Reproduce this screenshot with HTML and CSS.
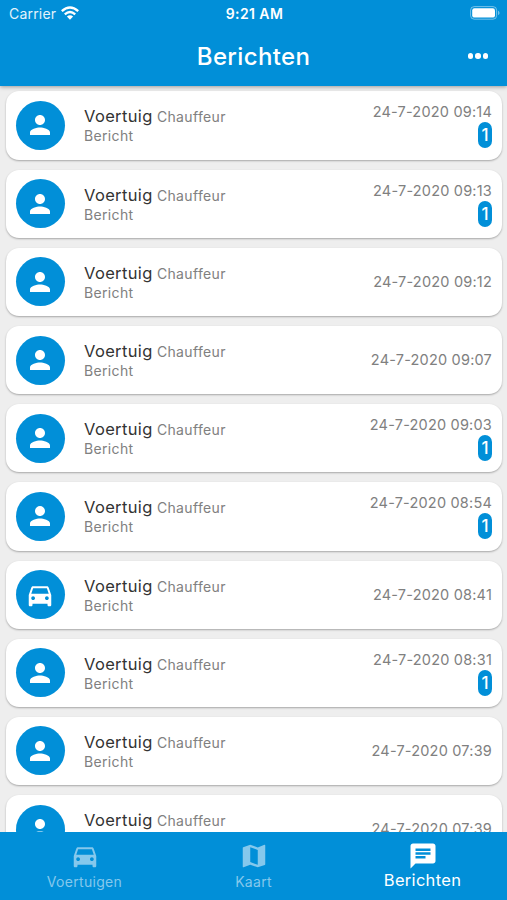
FILE: index.html
```html
<!DOCTYPE html>
<html lang="nl">
<head>
    <meta charset="UTF-8">
    <meta name="viewport" content="width=device-width, initial-scale=1.0">
    <title>Berichten</title>
    <link rel="stylesheet" href="styles.css">
</head>
<body>

    <svg class="sprite">
        <symbol id="person" viewBox="0 0 24 24"><path d="M12 12c2.21 0 4-1.79 4-4s-1.79-4-4-4-4 1.79-4 4 1.79 4 4 4zm0 2c-2.67 0-8 1.34-8 4v2h16v-2c0-2.66-5.33-4-8-4z"/></symbol>
        <symbol id="car" viewBox="0 0 24 24"><path d="M18.92 6.01C18.72 5.42 18.16 5 17.5 5h-11c-.66 0-1.21.42-1.42 1.01L3 12v8c0 .55.45 1 1 1h1c.55 0 1-.45 1-1v-1h12v1c0 .55.45 1 1 1h1c.55 0 1-.45 1-1v-8l-2.08-5.99zM6.5 16c-.83 0-1.5-.67-1.5-1.5S5.67 13 6.5 13s1.5.67 1.5 1.5S7.33 16 6.5 16zm11 0c-.83 0-1.5-.67-1.5-1.5s.67-1.5 1.5-1.5 1.5.67 1.5 1.5-.67 1.5-1.5 1.5zM5 11l1.5-4.5h11L19 11H5z"/></symbol>
        <symbol id="map" viewBox="0 0 24 24"><path d="M20.5 3l-.16.03L15 5.1 9 3 3.36 4.9c-.21.07-.36.25-.36.48V20.5c0 .28.22.5.5.5l.16-.03L9 18.9l6 2.1 5.64-1.9c.21-.07.36-.25.36-.48V3.5c0-.28-.22-.5-.5-.5zM15 19l-6-2.11V5l6 2.11V19z"/></symbol>
        <symbol id="chat" viewBox="0 0 24 24"><path d="M20 2H4c-1.1 0-1.99.9-1.99 2L2 22l4-4h14c1.1 0 2-.9 2-2V4c0-1.1-.9-2-2-2zM6 9h12v2H6V9zm8 5H6v-2h8v2zm4-6H6V6h12v2z"/></symbol>
    </svg>

    <header class="header">
        <div class="status-bar">
            <div class="carrier">
                <span>Carrier</span>
                <svg class="wifi" viewBox="0 0 18 14">
                    <path d="M.8 5.1Q9-1.9 17.2 5.1M3.8 8.3Q9 3.8 14.2 8.3"/>
                    <path class="wifi-dot" d="M9 13.8L5.9 10.5Q9 8 12.1 10.5z"/>
                </svg>
            </div>
            <span class="time">9:21 AM</span>
            <svg class="battery" viewBox="0 0 30 14">
                <rect class="battery-case" x=".6" y=".6" width="26" height="12.6" rx="3.6"/>
                <rect x="2.2" y="2.2" width="22.8" height="9.4" rx="2.2"/>
                <path class="battery-tip" d="M28 4.7c2 .7 2 3.7 0 4.4z"/>
            </svg>
        </div>
        <div class="title-bar">
            <h1>Berichten</h1>
            <div class="more"><i></i><i></i><i></i></div>
        </div>
    </header>

    <main class="messages" id="messages"></main>

    <nav class="tabs">
        <div class="tab">
            <svg><use href="#car"/></svg>
            <span>Voertuigen</span>
        </div>
        <div class="tab">
            <svg><use href="#map"/></svg>
            <span>Kaart</span>
        </div>
        <div class="tab active">
            <svg><use href="#chat"/></svg>
            <span>Berichten</span>
        </div>
    </nav>

    <script src="script.js"></script>
</body>
</html>
```

FILE: styles.css
```css
* {
    box-sizing: border-box;
}

body {
    margin: 0;
    height: 100vh;
    display: flex;
    flex-direction: column;
    overflow: hidden;
    background: #eeeeee;
    font-family: Inter, "Liberation Sans", sans-serif;
    color: #333;
}

svg {
    display: block;
    fill: currentColor;
}

.sprite {
    display: none;
}

/* header */
.header {
    flex: none;
    height: 86px;
    background: #018fd8;
    color: #fff;
    box-shadow: 0 1px 4px rgba(0, 0, 0, 0.35);
    z-index: 1;
}

.status-bar {
    height: 26px;
    padding: 0 7px 0 9px;
    display: grid;
    grid-template-columns: 1fr auto 1fr;
    align-items: center;
    font-size: 14px;
}

.carrier {
    display: flex;
    align-items: center;
    gap: 5px;
    letter-spacing: 0.2px;
    color: #e4f3fb;
}

.wifi {
    width: 18px;
    height: 14px;
    fill: none;
    stroke: #fff;
    stroke-width: 2.4;
}

.wifi .wifi-dot {
    fill: #fff;
    stroke: none;
}

.time {
    font-size: 14px;
    font-weight: 600;
    letter-spacing: 0.4px;
}

.battery {
    width: 30px;
    height: 14px;
    justify-self: end;
}

.battery-case {
    fill: none;
    stroke: #fff;
    stroke-opacity: 0.45;
}

.battery-tip {
    fill-opacity: 0.45;
}

.title-bar {
    height: 60px;
    padding: 0 19px;
    display: grid;
    grid-template-columns: 1fr auto 1fr;
    align-items: center;
}

.title-bar h1 {
    grid-column: 2;
    margin: 0;
    font-size: 24px;
    font-weight: 500;
    letter-spacing: 0.35px;
}

.more {
    justify-self: end;
    display: flex;
    gap: 2px;
}

.more i {
    width: 5.5px;
    height: 5.5px;
    border-radius: 50%;
    background: #fff;
}

/* messages */
.messages {
    flex: 1;
    min-height: 0;
    overflow: hidden;
    padding: 5.4px 5px 0 6px;
    display: flex;
    flex-direction: column;
    gap: 10px;
}

.card {
    flex: none;
    height: 68.2px;
    padding: 0 10px 0 9.5px;
    display: flex;
    align-items: center;
    background: #fff;
    border-radius: 13px;
    box-shadow: 0 1px 2px rgba(0, 0, 0, 0.3);
}

.avatar {
    width: 49px;
    height: 49px;
    margin-right: 19.5px;
    display: flex;
    align-items: center;
    justify-content: center;
    border-radius: 50%;
    background: #018fd8;
    color: #fff;
}

.avatar svg {
    width: 30px;
    height: 30px;
}

.info {
    flex: 1;
    padding-top: 2px;
    font-size: 14px;
    line-height: 19px;
    letter-spacing: 0.35px;
    color: #808080;
}

.vehicle {
    font-size: 16.5px;
    color: #333;
}

.meta {
    display: flex;
    flex-direction: column;
    align-items: flex-end;
    font-size: 14.5px;
    line-height: 20px;
    letter-spacing: 0.2px;
    color: #808080;
}

.badge {
    width: 14px;
    height: 26px;
    border-radius: 7px;
    background: #018fd8;
    color: #fff;
    font-size: 17px;
    font-weight: 500;
    line-height: 26px;
    letter-spacing: 0;
    text-align: center;
}

/* bottom tabs */
.tabs {
    flex: none;
    height: 68px;
    display: flex;
    background: #018fd8;
    color: #fff;
    z-index: 1;
}

.tab {
    flex: 1;
    padding-top: 9px;
    display: flex;
    flex-direction: column;
    align-items: center;
    color: #85c8ec;
    font-size: 14px;
    line-height: 18px;
    letter-spacing: 0.3px;
}

.tab svg {
    width: 30px;
    height: 30px;
    margin-bottom: 2px;
}

.tab.active {
    color: #fff;
    font-size: 16.5px;
}

.tab.active svg {
    margin-bottom: 0;
}
```

FILE: script.js
```js
const messages = [
    { icon: "person", date: "24-7-2020 09:14", unread: 1 },
    { icon: "person", date: "24-7-2020 09:13", unread: 1 },
    { icon: "person", date: "24-7-2020 09:12", unread: 0 },
    { icon: "person", date: "24-7-2020 09:07", unread: 0 },
    { icon: "person", date: "24-7-2020 09:03", unread: 1 },
    { icon: "person", date: "24-7-2020 08:54", unread: 1 },
    { icon: "car", date: "24-7-2020 08:41", unread: 0 },
    { icon: "person", date: "24-7-2020 08:31", unread: 1 },
    { icon: "person", date: "24-7-2020 07:39", unread: 0 },
    { icon: "person", date: "24-7-2020 07:39", unread: 0 }
];

document.getElementById("messages").innerHTML = messages.map(m => `
    <div class="card">
        <div class="avatar"><svg><use href="#${m.icon}"/></svg></div>
        <div class="info">
            <div><span class="vehicle">Voertuig</span> <span>Chauffeur</span></div>
            <div>Bericht</div>
        </div>
        <div class="meta">
            <span>${m.date}</span>
            ${m.unread ? `<span class="badge">${m.unread}</span>` : ""}
        </div>
    </div>
`).join("");
```
